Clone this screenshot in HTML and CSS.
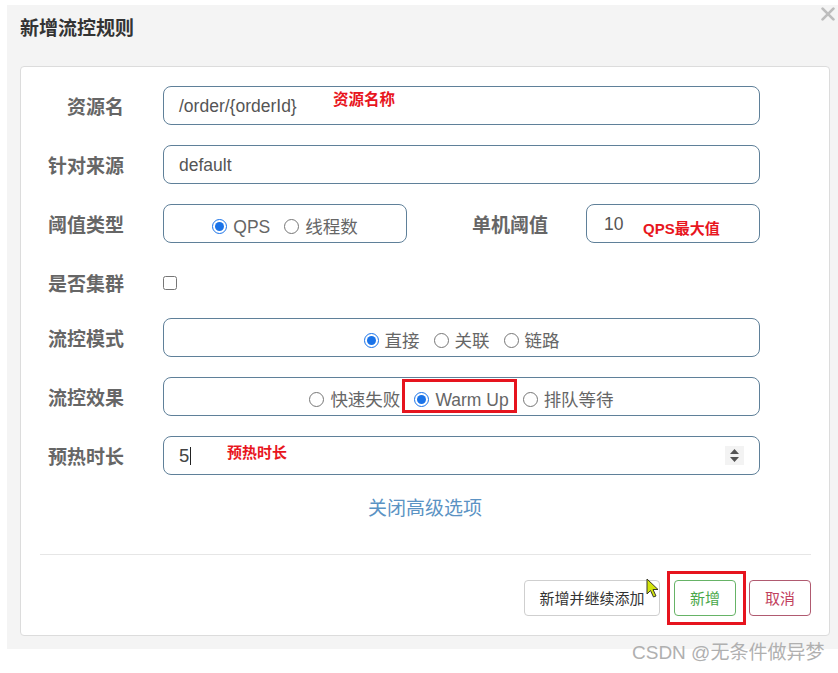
FILE: index.html
```html
<!DOCTYPE html>
<html lang="zh-CN">
<head>
<meta charset="utf-8">
<title>新增流控规则</title>
<link rel="stylesheet" href="styles.css">
</head>
<body>
<div class="dialog">
  <div class="dialog-header">
    <h4 class="title">新增流控规则</h4>
    <button class="close" type="button" aria-label="关闭">
      <svg width="14" height="14" viewBox="0 0 14 14"><path d="M1.6 1.6 L12.4 12.4 M12.4 1.6 L1.6 12.4" stroke="#bdbdbd" stroke-width="2.7" stroke-linecap="round"/></svg>
    </button>
  </div>
  <div class="card">
    <div class="form">
      <label class="label">资源名</label>
      <div class="field"><span class="value">/order/{orderId}</span><span class="note note-res">资源名称</span></div>

      <label class="label">针对来源</label>
      <div class="field"><span class="value">default</span></div>

      <label class="label">阈值类型</label>
      <div class="split">
        <div class="field radios narrow">
          <label class="opt"><input type="radio" name="grade" checked><span>QPS</span></label>
          <label class="opt"><input type="radio" name="grade"><span>线程数</span></label>
        </div>
        <label class="label label-2">单机阈值</label>
        <div class="field field-small"><span class="value">10</span><span class="note note-qps">QPS最大值</span></div>
      </div>

      <label class="label row-check">是否集群</label>
      <div class="check-cell row-check"><input type="checkbox" class="check"></div>

      <label class="label">流控模式</label>
      <div class="field radios">
        <label class="opt"><input type="radio" name="strategy" checked><span>直接</span></label>
        <label class="opt"><input type="radio" name="strategy"><span>关联</span></label>
        <label class="opt"><input type="radio" name="strategy"><span>链路</span></label>
      </div>

      <label class="label">流控效果</label>
      <div class="field radios">
        <label class="opt"><input type="radio" name="behavior"><span>快速失败</span></label>
        <label class="opt hl"><input type="radio" name="behavior" checked><span>Warm Up</span></label>
        <label class="opt"><input type="radio" name="behavior"><span>排队等待</span></label>
      </div>

      <label class="label">预热时长</label>
      <div class="field">
        <span class="value value-big">5</span><span class="caret"></span>
        <span class="note note-warm">预热时长</span>
        <span class="spinner">
          <svg width="19" height="19" viewBox="0 0 19 19"><path d="M5 8 L9.5 3 L14 8 Z M5 11 L9.5 16 L14 11 Z" fill="#555"/></svg>
        </span>
      </div>
    </div>

    <div class="toggle">关闭高级选项</div>
    <div class="divider"></div>

    <div class="footer">
      <button class="btn btn-continue" type="button">新增并继续添加</button>
      <span class="highlight"><button class="btn btn-ok" type="button">新增</button></span>
      <button class="btn btn-cancel" type="button">取消</button>
    </div>
  </div>
</div>

<svg class="pointer" width="14" height="21" viewBox="0 0 14 21"><path d="M1 1 L1 16 L4.5 12.5 L7.5 19 L10 18 L7 11.5 L12 11.5 Z" fill="#d2e40c" stroke="#3a3a2a" stroke-width="1" stroke-linejoin="round"/></svg>

<div class="watermark">CSDN @无条件做异梦</div>
</body>
</html>
```

FILE: styles.css
```css
* { box-sizing: border-box; }

html, body {
  margin: 0;
  background: #fff;
}

body {
  position: relative;
  width: 838px;
  height: 673px;
  overflow: hidden;
  font-family: "Liberation Sans", "Noto Sans CJK SC", sans-serif;
  color: #555;
}

.dialog {
  position: relative;
  margin: 5px 0 0 7px;
  width: 831px;
  height: 644px;
  background: #f4f4f4;
  padding-left: 13px;
}

.dialog-header {
  height: 61px;
  padding-top: 10px;
}

.title {
  margin: 0;
  font-family: "Noto Sans CJK SC", sans-serif;
  font-size: 19px;
  line-height: 24px;
  font-weight: bold;
  color: #333;
}

.close {
  position: absolute;
  top: 2px;
  right: 3px;
  width: 14px;
  height: 14px;
  padding: 0;
  border: 0;
  background: none;
  display: block;
}
.close svg { display: block; }

.card {
  width: 810px;
  height: 570px;
  background: #fff;
  border: 1px solid #dcdcdc;
  border-radius: 4px;
  padding-top: 19px;
}

.form {
  display: grid;
  grid-template-columns: 103px 597px;
  grid-template-rows: 39px 39px 39px 35px 39px 39px 39px;
  column-gap: 39px;
  row-gap: 20px;
}

.label {
  font-family: "Noto Sans CJK SC", sans-serif;
  font-size: 19px;
  font-weight: bold;
  line-height: 40px;
  color: #666;
  text-align: right;
  white-space: nowrap;
}

.field {
  position: relative;
  height: 39px;
  display: flex;
  align-items: center;
  padding: 0 15px;
  border: 1px solid #5f8099;
  border-radius: 8px;
  font-size: 17.5px;
  line-height: 22px;
  color: #555;
}

.value { white-space: nowrap; }
.value-big { font-size: 18.5px; color: #444; }

.caret {
  width: 1px;
  height: 18px;
  margin-left: 1px;
  background: #222;
}

.note {
  position: absolute;
  font-family: "Liberation Sans", "Noto Sans CJK SC", sans-serif;
  font-size: 15.5px;
  font-weight: bold;
  line-height: 18px;
  color: #e8161e;
  white-space: nowrap;
}
.note-res { left: 169px; top: 4px; }
.note-qps { left: 56px; top: 15px; font-size: 15px; }
.note-warm { left: 63px; top: 7px; font-size: 15px; }

.spinner {
  margin-left: auto;
  width: 19px;
  height: 19px;
  background: #f3f3f3;
  display: block;
}
.spinner svg { display: block; }

.radios {
  justify-content: center;
  gap: 14px;
  padding-top: 6px;
}

.opt {
  position: relative;
  display: inline-flex;
  align-items: center;
  gap: 6px;
  color: #666;
  white-space: nowrap;
}

.opt input {
  margin: 0;
  width: 15px;
  height: 15px;
  accent-color: #1a73e8;
}

.opt.hl::after {
  content: "";
  position: absolute;
  left: -12px;
  right: -8px;
  top: -10px;
  bottom: -2px;
  border: 3px solid #e6141e;
}

.split {
  display: flex;
  align-items: center;
}

.narrow {
  width: 244px;
  flex: none;
}

.label-2 {
  width: 141px;
  flex: none;
  margin-right: 38px;
}

.field-small {
  flex: 1;
  padding-left: 17px;
}

.row-check {
  padding-top: 4px;
  line-height: 32px;
}

.check-cell {
  display: flex;
  align-items: center;
}

.check {
  margin: 0;
  width: 14px;
  height: 14px;
}

.toggle {
  margin-top: 19px;
  font-family: "Noto Sans CJK SC", sans-serif;
  font-size: 19px;
  line-height: 26px;
  color: #5b93c4;
  text-align: center;
}

.divider {
  margin: 34px 18px 0 19px;
  border-top: 1px solid #e6e6e6;
}

.footer {
  display: flex;
  justify-content: flex-end;
  padding: 25px 18px 0 0;
}

.btn {
  height: 36px;
  padding: 0;
  background: #fff;
  border-radius: 4px;
  font-family: "Noto Sans CJK SC", sans-serif;
  font-size: 15px;
  line-height: 20px;
  cursor: pointer;
}

.btn-continue {
  width: 136px;
  margin-right: 14px;
  border: 1px solid #cfcfcf;
  color: #333;
}

.highlight {
  position: relative;
  display: block;
  margin-right: 13px;
}
.highlight::after {
  content: "";
  position: absolute;
  left: -7px;
  right: -10px;
  top: -9px;
  bottom: -9px;
  border: 3px solid #e6141e;
}

.btn-ok {
  display: block;
  width: 62px;
  border: 1px solid #66b366;
  color: #4aa84a;
}

.btn-cancel {
  width: 62px;
  border: 1px solid #b05a70;
  color: #c2405e;
}

.pointer {
  position: absolute;
  left: 646px;
  top: 578px;
}

.watermark {
  position: absolute;
  left: 632px;
  top: 641px;
  font-size: 19px;
  line-height: 24px;
  color: #b0b0b0;
  white-space: nowrap;
}
```
